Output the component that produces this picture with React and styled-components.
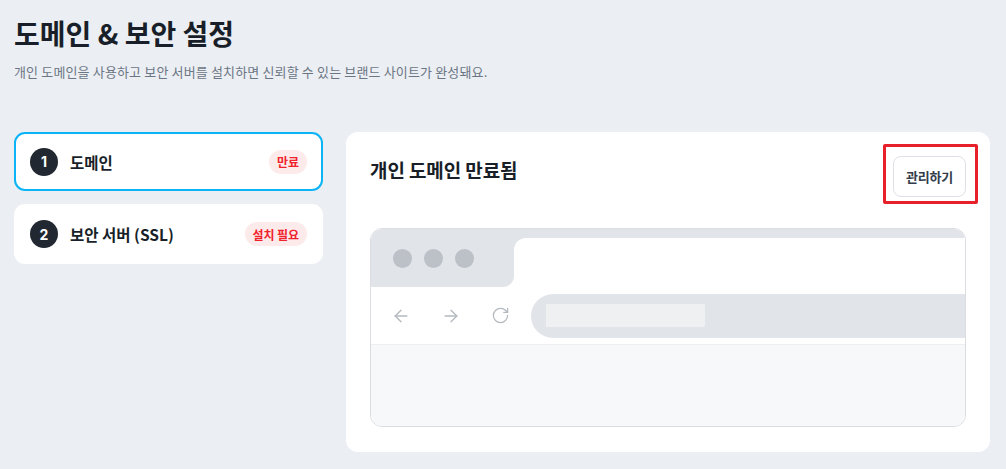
import React from "react";
import styled, { createGlobalStyle } from "styled-components";
import { ArrowLeft, ArrowRight, RotateCw } from "lucide-react";

const Global = createGlobalStyle`
  * { box-sizing: border-box; }
  html, body { margin: 0; padding: 0; }
  body {
    background: #ebeef3;
    font-family: "Noto Sans CJK KR", "Noto Sans", sans-serif;
    color: #191f28;
  }
`;

const Page = styled.div`
  padding: 15px 16px 0 14px;
  min-height: 469px;
`;

const Title = styled.h1`
  margin: 0;
  font-size: 28px;
  line-height: 36px;
  font-weight: 700;
  letter-spacing: 0;
  color: #191f28;
`;

const Subtitle = styled.p`
  margin: 11px 0 0;
  font-size: 13px;
  line-height: 20px;
  color: #6b7684;
  letter-spacing: 0.15px;
`;

const Layout = styled.div`
  margin-top: 50px;
  display: grid;
  grid-template-columns: 309px 1fr;
  gap: 23px;
  align-items: start;
`;

const StepList = styled.div`
  display: flex;
  flex-direction: column;
  gap: 13px;
`;

const StepCard = styled.div`
  height: ${(p) => (p.$active ? "59px" : "60px")};
  background: #fff;
  border-radius: 11px;
  border: 2px solid ${(p) => (p.$active ? "#0bb4f6" : "#fff")};
  display: flex;
  align-items: center;
  padding: 0 14px;
`;

const StepNum = styled.span`
  width: 28px;
  height: 28px;
  border-radius: 50%;
  background: #222831;
  color: #fff;
  font-family: "Inter", "Noto Sans", sans-serif;
  font-size: 14px;
  font-weight: 700;
  display: flex;
  align-items: center;
  justify-content: center;
  flex-shrink: 0;
`;

const StepLabel = styled.span`
  margin-left: 12px;
  font-size: 15.5px;
  font-weight: 700;
  flex: 1;
  letter-spacing: 0;
  color: #191f28;
`;

const Badge = styled.span`
  height: 24px;
  padding: 0 8px;
  border-radius: 12px;
  background: #fdeaea;
  color: #f0222c;
  font-size: 12px;
  font-weight: 700;
  display: inline-flex;
  align-items: center;
  letter-spacing: -0.1px;
`;

const Panel = styled.section`
  background: #fff;
  border-radius: 12px;
  padding: 24px;
  height: 320px;
`;

const PanelHeader = styled.div`
  display: flex;
  justify-content: space-between;
  align-items: flex-start;
  height: 41px;
`;

const PanelTitle = styled.h2`
  margin: 0;
  font-size: 19px;
  line-height: 28px;
  font-weight: 700;
  letter-spacing: -0.1px;
  color: #191f28;
`;

const ButtonWrap = styled.div`
  position: relative;
`;

const Highlight = styled.div`
  position: absolute;
  top: -12px;
  left: -10px;
  right: -12px;
  bottom: -7px;
  border: 3px solid #e8202a;
  border-radius: 2px;
  pointer-events: none;
`;

const ManageButton = styled.button`
  width: 73px;
  height: 41px;
  border: 1px solid #dde0e5;
  border-radius: 8px;
  background: #fff;
  font-family: inherit;
  font-size: 13px;
  font-weight: 700;
  color: #333d4b;
  letter-spacing: -0.2px;
  cursor: pointer;
`;

const Browser = styled.div`
  margin-top: 31px;
  height: 199px;
  border: 1px solid #dadde2;
  border-radius: 12px;
  overflow: hidden;
  display: flex;
  flex-direction: column;
  background: #fff;
`;

const TabBar = styled.div`
  height: 58px;
  display: flex;
  background: #fff;
`;

const DotsArea = styled.div`
  width: 143px;
  background: #e1e4e9;
  border-bottom-right-radius: 11px;
  display: flex;
  align-items: center;
  gap: 12px;
  padding-left: 22px;
`;

const Dot = styled.span`
  width: 19px;
  height: 19px;
  border-radius: 50%;
  background: #bcc0c7;
`;

const TabTrack = styled.div`
  flex: 1;
  background: #e1e4e9;
  padding-top: 9px;
  display: flex;
`;

const Tab = styled.div`
  flex: 1;
  background: #fff;
  border-top-left-radius: 12px;
`;

const NavRow = styled.div`
  height: 58px;
  display: flex;
  align-items: center;
  padding-left: 20px;
  color: #b4b9c0;
  border-bottom: 1px solid #eceef1;
`;

const NavIcons = styled.div`
  display: flex;
  align-items: center;
  gap: 30px;
`;

const UrlBar = styled.div`
  flex: 1;
  margin-left: 21px;
  height: 44px;
  background: #e1e4e9;
  border-radius: 22px 0 0 22px;
  display: flex;
  align-items: center;
  padding-left: 15px;
`;

const UrlField = styled.div`
  width: 159px;
  height: 23px;
  background: #eff0f2;
  border-radius: 1px;
`;

const Viewport = styled.div`
  flex: 1;
  background: #f7f8fa;
`;

const steps = [
  { n: 1, label: "도메인", badge: "만료", active: true },
  { n: 2, label: "보안 서버 (SSL)", badge: "설치 필요", active: false },
];

export default function App() {
  return (
    <>
      <Global />
      <Page>
        <Title>도메인 &amp; 보안 설정</Title>
        <Subtitle>
          개인 도메인을 사용하고 보안 서버를 설치하면 신뢰할 수 있는 브랜드 사이트가 완성돼요.
        </Subtitle>
        <Layout>
          <StepList>
            {steps.map((s) => (
              <StepCard key={s.n} $active={s.active}>
                <StepNum>{s.n}</StepNum>
                <StepLabel>{s.label}</StepLabel>
                <Badge>{s.badge}</Badge>
              </StepCard>
            ))}
          </StepList>
          <Panel>
            <PanelHeader>
              <PanelTitle>개인 도메인 만료됨</PanelTitle>
              <ButtonWrap>
                <ManageButton>관리하기</ManageButton>
                <Highlight />
              </ButtonWrap>
            </PanelHeader>
            <Browser>
              <TabBar>
                <DotsArea>
                  <Dot />
                  <Dot />
                  <Dot />
                </DotsArea>
                <TabTrack>
                  <Tab />
                </TabTrack>
              </TabBar>
              <NavRow>
                <NavIcons>
                  <ArrowLeft size={20} strokeWidth={1.6} />
                  <ArrowRight size={20} strokeWidth={1.6} />
                  <RotateCw size={19} strokeWidth={1.6} />
                </NavIcons>
                <UrlBar>
                  <UrlField />
                </UrlBar>
              </NavRow>
              <Viewport />
            </Browser>
          </Panel>
        </Layout>
      </Page>
    </>
  );
}
